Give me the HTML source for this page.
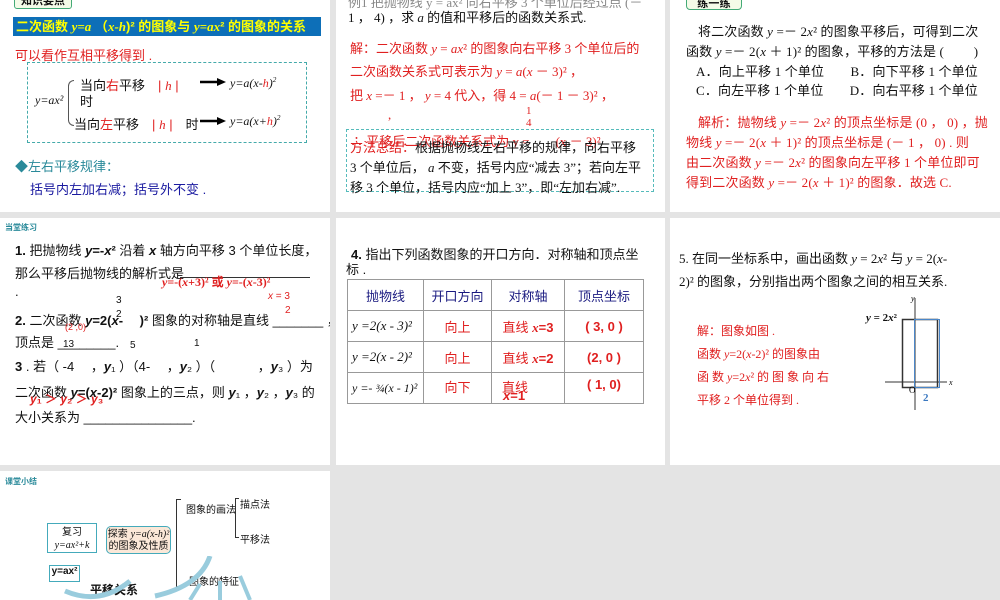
<!DOCTYPE html>
<html><head><meta charset="utf-8"><style>
*{margin:0;padding:0;box-sizing:border-box}
body{width:1000px;height:600px;background:#e4e4e4;position:relative;overflow:hidden;font-family:"Liberation Sans","Noto Sans CJK SC",sans-serif;color:#111}
.p{position:absolute;background:#fff;overflow:hidden}
.a{position:absolute;white-space:nowrap}
.r{color:#e02020}
.i{font-family:"Liberation Serif",serif;font-style:italic}
.s{font-family:"Liberation Serif","Noto Sans CJK SC",serif}
sup{font-size:60%}
table{border-collapse:collapse}
td{border:1px solid #999;text-align:center;font-size:13px;height:31px}
</style></head><body>

<!-- panel 1 -->
<div class="p" style="left:0;top:0;width:330px;height:212px">
 <div class="a" style="left:14px;top:-6px;width:58px;height:15px;border:1px solid #4a7;border-radius:3px;background:#f4fbe8;font-size:11px;font-weight:bold;text-align:center;line-height:12px">知识要点</div>
 <div class="a" style="left:13px;top:17px;width:308px;height:19px;background:#0d6fb8;color:#ff0;font-weight:bold;font-size:13px;line-height:19px;padding-left:3px">二次函数 <span class="i">y=a</span> （<span class="i">x-h</span>)² 的图象与 <span class="i">y=ax</span>² 的图象的关系</div>
 <div class="a r" style="left:15px;top:45px;font-size:13px">可以看作互相平移得到 .</div>
 <div class="a" style="left:27px;top:62px;width:280px;height:81px;border:1px dashed #4aa"></div>
 <div class="a i" style="left:35px;top:93px;font-size:12px">y=ax²</div>
 <div class="a" style="left:68px;top:80px;width:6px;height:46px;border:1px solid #555;border-right:none;border-radius:6px 0 0 6px"></div>
 <div class="a" style="left:80px;top:75px;font-size:13px">当向<span class="r">右</span>平移　<span class="r">|</span> <span class="r i">h</span> <span class="r">|</span></div>
 <div class="a" style="left:80px;top:91px;font-size:13px">时</div>
 <div class="a" style="left:74px;top:114px;font-size:13px">当向<span class="r">左</span>平移　<span class="r">|</span> <span class="r i">h</span> <span class="r">|</span>　时</div>
 <svg class="a" style="left:200px;top:78px" width="26" height="50"><path d="M0 4H18M0 43H18" stroke="#000" stroke-width="2.5"/><path d="M17 0L26 4L17 8ZM17 39L26 43L17 47Z"/></svg>
 <div class="a i" style="left:230px;top:76px;font-size:12px">y=a(x-<span class="r">h</span>)<sup>2</sup></div>
 <div class="a i" style="left:230px;top:114px;font-size:12px">y=a(x+<span class="r">h</span>)<sup>2</sup></div>
 <div class="a" style="left:15px;top:156px;font-size:13px;color:#2a8a9a">◆左右平移规律：</div>
 <div class="a" style="left:30px;top:179px;font-size:13px;color:#1a1aa0">括号内左加右减；括号外不变 .</div>
</div>

<!-- panel 2 -->
<div class="p s" style="left:336px;top:0;width:329px;height:212px;font-size:13px">
 <div class="a" style="left:12px;top:-8px;color:#888">例1 把抛物线 y = ax² 向右平移 3 个单位后经过点 (－</div>
 <div class="a" style="left:12px;top:7px">1 ，  4) ，求 <i>a</i> 的值和平移后的函数关系式.</div>
 <div class="a r" style="left:14px;top:38px">解：二次函数 <i>y</i> = <i>ax</i>² 的图象向右平移 3 个单位后的</div>
 <div class="a r" style="left:14px;top:61px">二次函数关系式可表示为 <i>y</i> = <i>a</i>(<i>x</i> － 3)² ，</div>
 <div class="a r" style="left:14px;top:85px">把 <i>x</i> =－ 1 ，  <i>y</i> = 4 代入，得 4 = <i>a</i>(－ 1 － 3)² ，</div>
 <div class="a r" style="left:52px;top:107px">,</div>
 <div class="a r" style="left:190px;top:105px;font-size:11px">1</div>
 <div class="a r" style="left:190px;top:117px;font-size:11px">4</div>
 <div class="a" style="left:10px;top:129px;width:308px;height:63px;border:1px dashed #5bb"></div>
 <div class="a r" style="left:14px;top:131px">∴ 平移后二次函数关系式为 y =　　(x － 3)²</div>
 <div class="a" style="left:14px;top:137px"><span class="r">方法总结：</span>根据抛物线左右平移的规律，向右平移</div>
 <div class="a" style="left:14px;top:157px">3 个单位后， <i>a</i> 不变，括号内应“减去 3”；若向左平</div>
 <div class="a" style="left:14px;top:177px">移 3 个单位，括号内应“加上 3”，即“左加右减”.</div>
</div>

<!-- panel 3 -->
<div class="p s" style="left:670px;top:0;width:330px;height:212px;font-size:13px;letter-spacing:0.15px">
 <div class="a" style="left:16px;top:-6px;width:56px;height:16px;border:1px solid #4a7;border-radius:4px;background:#f4fbe8;font-size:11px;font-weight:bold;text-align:center">练一练</div>
 <div class="a" style="left:28px;top:21px">将二次函数 <i>y</i> =－ 2<i>x</i>² 的图象平移后，可得到二次</div>
 <div class="a" style="left:16px;top:41px">函数 <i>y</i> =－ 2(<i>x</i> ＋ 1)² 的图象，平移的方法是 (　　 )</div>
 <div class="a" style="left:26px;top:61px">A．向上平移 1 个单位　　B．向下平移 1 个单位</div>
 <div class="a" style="left:26px;top:80px">C．向左平移 1 个单位　　D．向右平移 1 个单位</div>
 <div class="a r" style="left:28px;top:112px">解析：抛物线 <i>y</i> =－ 2<i>x</i>² 的顶点坐标是 (0 ，  0) ，抛</div>
 <div class="a r" style="left:16px;top:132px">物线 <i>y</i> =－ 2(<i>x</i> ＋ 1)² 的顶点坐标是 (－ 1 ，  0) . 则</div>
 <div class="a r" style="left:16px;top:152px">由二次函数 <i>y</i> =－ 2<i>x</i>² 的图象向左平移 1 个单位即可</div>
 <div class="a r" style="left:16px;top:172px">得到二次函数 <i>y</i> =－ 2(<i>x</i> ＋ 1)² 的图象．故选 C.</div>
</div>

<!-- panel 4 -->
<div class="p" style="left:0;top:218px;width:330px;height:247px;font-size:13px">
 <div class="a" style="left:5px;top:4px;font-size:8px;color:#2a8a9a;font-weight:bold">当堂练习</div>
 <div class="a" style="left:15px;top:22px"><b>1.</b> 把抛物线 <b><i>y</i>=-<i>x</i>²</b> 沿着 <b><i>x</i></b> 轴方向平移 3 个单位长度，</div>
 <div class="a" style="left:15px;top:45px">那么平移后抛物线的解析式是</div>
 <div class="a" style="left:180px;top:59px;width:130px;border-top:1px solid #333"></div>
 <div class="a r s" style="left:162px;top:55px;font-weight:bold;font-size:12px"><i>y</i>=-(<i>x</i>+3)² 或 <i>y</i>=-(<i>x</i>-3)²</div>
 <div class="a" style="left:15px;top:66px">.</div>
 <div class="a" style="left:15px;top:92px"><b>2.</b> 二次函数 <b><i>y</i>=2(<i>x</i>-</b>　 <b>)²</b> 图象的对称轴是直线 _______ ，</div>
 <div class="a" style="left:116px;top:77px;font-size:10px">3</div><div class="a" style="left:116px;top:91px;font-size:10px">2</div>
 <div class="a r" style="left:268px;top:73px;font-size:10px"><i>x</i> = 3</div><div class="a r" style="left:285px;top:87px;font-size:10px">2</div>
 <div class="a r" style="left:65px;top:104px;font-size:9px">(2 ,0)</div>
 <div class="a" style="left:15px;top:114px">顶点是 ________.</div>
 <div class="a" style="left:63px;top:121px;font-size:10px">13</div>
 <div class="a" style="left:15px;top:138px"><b>3</b> . 若（ -4　 ，<b><i>y</i></b>₁ ）（4-　 ，<b><i>y</i></b>₂ ）（　　　 ，<b><i>y</i></b>₃ ）为</div>
 <div class="a" style="left:130px;top:122px;font-size:10px">5</div><div class="a" style="left:194px;top:120px;font-size:10px">1</div>
 <div class="a" style="left:15px;top:164px">二次函数 <b><i>y</i>=(<i>x</i>-2)²</b> 图象上的三点，则 <b><i>y</i></b>₁ ，<b><i>y</i></b>₂ ，<b><i>y</i></b>₃ 的</div>
 <div class="a r" style="left:30px;top:172px;font-size:12px;font-weight:bold"><i>y</i>₁ ＞ <i>y</i>₂ ＞ <i>y</i>₃</div>
 <div class="a" style="left:15px;top:189px">大小关系为 _______________.</div>
</div>

<!-- panel 5 -->
<div class="p" style="left:336px;top:218px;width:329px;height:247px;font-size:13px">
 <div class="a" style="left:15px;top:26px"><b>4.</b> 指出下列函数图象的开口方向．对称轴和顶点坐</div>
 <div class="a" style="left:10px;top:41px">标 .</div>
 <table class="a" style="left:11px;top:61px;width:297px">
  <tr style="color:#1a1a80"><td style="width:76px;height:28px">抛物线</td><td style="width:68px">开口方向</td><td style="width:73px">对称轴</td><td>顶点坐标</td></tr>
  <tr><td class="s i" style="text-align:left;padding-left:4px">y =2(x - 3)²</td><td class="r">向上</td><td class="r">直线 <b class="s i">x</b><b>=3</b></td><td class="r"><b>( 3, 0 )</b></td></tr>
  <tr><td class="s i" style="text-align:left;padding-left:4px">y =2(x - 2)²</td><td class="r">向上</td><td class="r">直线 <b class="s i">x</b><b>=2</b></td><td class="r"><b>(2, 0 )</b></td></tr>
  <tr><td class="s i" style="text-align:left;padding-left:4px;font-size:12px">y =- ¾(x - 1)²</td><td class="r" style="vertical-align:top;padding-top:4px">向下</td><td class="r" style="text-align:left;padding-left:10px;vertical-align:top;padding-top:4px">直线</td><td class="r" style="vertical-align:top;padding-top:4px"><b>( 1, 0)</b></td></tr>
 </table>
 <div class="a r" style="left:167px;top:170px;font-weight:bold"><i>x</i>=1</div>
</div>

<!-- panel 6 -->
<div class="p s" style="left:670px;top:218px;width:330px;height:247px;font-size:13px">
 <div class="a" style="left:9px;top:30px">5. 在同一坐标系中，画出函数 <i>y</i> = 2<i>x</i>² 与 <i>y</i> = 2(<i>x</i>-</div>
 <div class="a" style="left:9px;top:53px">2)² 的图象，分别指出两个图象之间的相互关系.</div>
 <div class="a r" style="left:27px;top:104px;font-size:12px">解：图象如图 .</div>
 <div class="a r" style="left:27px;top:127px;font-size:12px">函数 <i>y</i>=2(<i>x</i>-2)² 的图象由</div>
 <div class="a r" style="left:27px;top:150px;font-size:12px">函 数 <i>y</i>=2<i>x</i>² 的 图 象 向 右</div>
 <div class="a r" style="left:27px;top:173px;font-size:12px">平移 2 个单位得到 .</div>
 <svg class="a" style="left:195px;top:75px" width="90" height="120">
  <line x1="50" y1="5" x2="50" y2="117" stroke="#333"/>
  <line x1="20" y1="89" x2="82" y2="89" stroke="#333"/>
  <rect x="37.5" y="26.5" width="35" height="68" fill="none" stroke="#333" stroke-width="1.5"/>
  <rect x="49.5" y="26.5" width="25" height="68" fill="none" stroke="#4a86c8"/>
  <text x="58" y="108" font-size="11" fill="#3a78c0" font-weight="bold">2</text>
  <text x="44" y="100" font-size="9">O</text>
  <text x="84" y="92" font-size="8" font-style="italic">x</text>
  <text x="46" y="8" font-size="8" font-style="italic">y</text>
 </svg>
 <div class="a" style="left:196px;top:94px;font-size:11px;font-weight:bold"><i>y</i> = 2<i>x</i>²</div>
</div>

<!-- panel 7 -->
<div class="p" style="left:0;top:471px;width:330px;height:129px;font-size:10px">
 <div class="a" style="left:5px;top:5px;font-size:8px;color:#2a8a9a;font-weight:bold">课堂小结</div>
 <div class="a" style="left:47px;top:52px;width:50px;height:30px;border:1px solid #4ab;text-align:center;line-height:13px;padding-top:2px">复习<br><span class="i">y=ax²+k</span></div>
 <div class="a" style="left:106px;top:55px;width:65px;height:28px;border:1px solid #4ab;border-radius:5px;background:#fbe8d8;text-align:center;line-height:12px;padding-top:2px">探索 <span class="i">y=a(x-h)²</span><br>的图象及性质</div>
 <div class="a" style="left:49px;top:94px;width:31px;height:17px;border:1px solid #4ab;text-align:center;font-weight:bold">y=ax²</div>
 <div class="a" style="left:90px;top:110px;font-size:12px;font-weight:bold">平移关系</div>
 <div class="a" style="left:176px;top:28px;width:5px;height:88px;border:1px solid #333;border-right:none"></div>
 <div class="a" style="left:186px;top:30px">图象的画法</div>
 <div class="a" style="left:235px;top:27px;width:4px;height:40px;border:1px solid #333;border-right:none"></div>
 <div class="a" style="left:240px;top:25px">描点法</div>
 <div class="a" style="left:240px;top:60px">平移法</div>
 <div class="a" style="left:189px;top:102px">图象的特征</div>
 <svg class="a" style="left:60px;top:85px" width="200" height="44">
  <path d="M5 35 Q40 50 70 25" fill="none" stroke="#9cd" stroke-width="5"/>
  <path d="M95 40 Q140 30 150 0" fill="none" stroke="#9cd" stroke-width="5"/>
  <path d="M130 44 L140 28" stroke="#9cd" stroke-width="4"/>
  <path d="M160 44 L160 25" stroke="#9cd" stroke-width="4"/>
  <path d="M180 20 L190 44" stroke="#9cd" stroke-width="4"/>
 </svg>
</div>
</body></html>
